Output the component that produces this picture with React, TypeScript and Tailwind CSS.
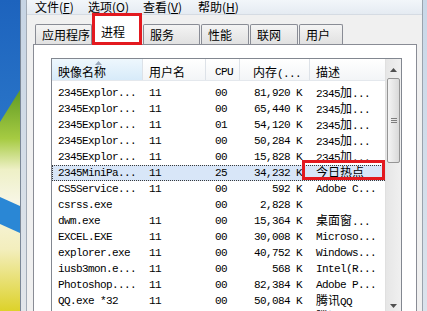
import clsx from 'clsx';

type Proc = [string, string, string, string, string];

const ROWS: Proc[] = [
  ['2345Explor...', '11', '00', '81,920 K', '2345加...'],
  ['2345Explor...', '11', '00', '65,440 K', '2345加...'],
  ['2345Explor...', '11', '01', '54,120 K', '2345加...'],
  ['2345Explor...', '11', '00', '50,284 K', '2345加...'],
  ['2345Explor...', '11', '00', '15,828 K', '2345加...'],
  ['2345MiniPa...', '11', '25', '34,232 K', '今日热点'],
  ['CS5Service...', '11', '00', '592 K', 'Adobe C...'],
  ['csrss.exe', '', '00', '2,828 K', ''],
  ['dwm.exe', '11', '00', '15,364 K', '桌面窗...'],
  ['EXCEL.EXE', '11', '00', '30,008 K', 'Microso...'],
  ['explorer.exe', '11', '00', '40,752 K', 'Windows...'],
  ['iusb3mon.e...', '11', '00', '568 K', 'Intel(R...'],
  ['Photoshop....', '11', '00', '82,384 K', 'Adobe P...'],
  ['QQ.exe *32', '11', '00', '50,084 K', '腾讯QQ'],
  ['QQExternal...', '11', '00', '9,140 K', '腾讯QQ...'],
];

const SELECTED = 5;

// CJK runs get the 12px CJK face, the rest stays in the narrow mono
function Txt({ s }: { s: string }) {
  const parts = s.split(/([\u3400-\u9fff]+)/);
  return (
    <>
      {parts.map((p, i) =>
        /[\u3400-\u9fff]/.test(p) ? (
          <span key={i} className="font-['Noto_Sans_CJK_SC',sans-serif] text-[12px] tracking-normal">
            {p}
          </span>
        ) : (
          <span key={i}>{p}</span>
        )
      )}
    </>
  );
}

function Wallpaper() {
  return (
    <svg width="20" height="311" viewBox="0 0 20 311" className="shrink-0 block">
      <defs>
        <linearGradient id="sky" x1="0" y1="0" x2="0" y2="1">
          <stop offset="0" stopColor="#1d63bd" />
          <stop offset="1" stopColor="#3b8ed8" />
        </linearGradient>
        <linearGradient id="land" gradientUnits="userSpaceOnUse" x1="0" y1="90" x2="0" y2="311">
          <stop offset="0" stopColor="#5f9a24" />
          <stop offset="0.22" stopColor="#a6cb42" />
          <stop offset="0.36" stopColor="#eef0c6" />
          <stop offset="0.5" stopColor="#f7f6e4" />
          <stop offset="0.72" stopColor="#f3eebd" />
          <stop offset="1" stopColor="#ddd22a" />
        </linearGradient>
      </defs>
      <rect width="20" height="311" fill="url(#sky)" />
      <path d="M0 122 L20 90 L20 311 L0 311 Z" fill="url(#land)" />
      <path d="M0 197 L20 206 L20 233 L0 224 Z" fill="#2a87d5" />
    </svg>
  );
}

function Tab({ label, w, first }: { label: string; w: string; first?: boolean }) {
  return (
    <div
      className={clsx(
        'h-[20px] flex items-center pl-[6px] border border-b-0 border-[#898c95] rounded-t-[2px] bg-linear-to-b from-[#f4f4f4] to-[#e1e1e1]',
        w,
        !first && 'ml-[1px]'
      )}
    >
      {label}
    </div>
  );
}

function SortArrow() {
  return (
    <svg width="7" height="4" viewBox="0 0 7 4" className="absolute left-[43px] top-[2px]">
      <path d="M0 4 L3.5 0 L7 4 Z" fill="#9aa9bb" />
    </svg>
  );
}

function Arrow({ up }: { up?: boolean }) {
  return (
    <svg width="7" height="4" viewBox="0 0 7 4">
      <path d={up ? 'M0 4 L3.5 0 L7 4 Z' : 'M0 0 L7 0 L3.5 4 Z'} fill="#4f4f4f" />
    </svg>
  );
}

const mono = "font-['Liberation_Mono',monospace] text-[11px] tracking-[-0.6px]";

function Row({ r, sel }: { r: Proc; sel: boolean }) {
  return (
    <div
      className={clsx(
        'relative flex h-[16px] items-center leading-[16px] whitespace-nowrap',
        sel && 'bg-[#d8e6f8] outline-1 outline-dotted -outline-offset-1 outline-[#3a3a3a]'
      )}
    >
      <div className="w-[91px] pl-[6px] overflow-hidden"><Txt s={r[0]} /></div>
      <div className="w-[63px] pl-[6px]">{r[1]}</div>
      <div className="w-[34px] pl-[9px]">{r[2]}</div>
      <div className="w-[70px] pr-[8px] text-right">{r[3]}</div>
      <div className="w-[75px] pl-[6px] overflow-hidden"><Txt s={r[4]} /></div>
      {sel && (
        <div className="absolute left-[250px] top-[-5px] w-[83px] h-[20px] border-[3px] border-[#e3191f]" />
      )}
    </div>
  );
}

export default function App() {
  return (
    <div className="w-[427px] h-[311px] overflow-hidden flex bg-[#f0f0f0] text-black text-[12px] font-['Noto_Sans_CJK_SC',sans-serif]">
      <Wallpaper />
      {/* window frame */}
      <div className="w-[7px] shrink-0 bg-linear-to-b from-[#c6d4e4] to-[#e2e6ea] border-l border-l-[#7b8797] border-r border-r-[#a2abb6]" />

      <div className="flex-1 min-w-0 flex flex-col">
        {/* menu bar */}
        <div className="h-[15px] shrink-0 flex pl-[8px] leading-[14px] bg-linear-to-b from-[#f2f6fa] to-[#e5ebf2] border-b border-[#d5dbe3]">
          <span className="w-[53px]">文件(<u className="underline-offset-1">F</u>)</span>
          <span className="w-[55px]">选项(<u className="underline-offset-1">O</u>)</span>
          <span className="w-[55px]">查看(<u className="underline-offset-1">V</u>)</span>
          <span>帮助(<u className="underline-offset-1">H</u>)</span>
        </div>

        {/* tabs */}
        <div className="h-[29px] shrink-0 flex items-end pl-[8px] leading-[14px]">
          <Tab label="应用程序" w="w-[57px]" first />
          <div className="relative z-10 -mb-px w-[50px] h-[32px] flex items-start pt-[9px] pl-[6px] bg-white border-[3px] border-[#e3191f]">
            进程
          </div>
          <Tab label="服务" w="w-[57px]" />
          <Tab label="性能" w="w-[48px]" />
          <Tab label="联网" w="w-[48px]" />
          <Tab label="用户" w="w-[44px]" />
        </div>

        {/* tab page */}
        <div className="flex-1 ml-[6px] mr-[5px] bg-white border border-[#898c95] pl-[17px] pt-[13px]">
          <div className="w-[351px] h-[258px] flex border border-[#828790] overflow-hidden">
            <div className="w-[333px] flex flex-col">
              {/* header */}
              <div className="h-[22px] shrink-0 flex leading-[14px] border-b border-[#e4e8ed]">
                <div className="relative w-[91px] pl-[6px] pt-[6px] border-r border-[#dde2e8] bg-linear-to-b from-[#eef7fd] to-[#d7ebf9]">
                  <SortArrow />
                  映像名称
                </div>
                <div className="w-[63px] pl-[6px] pt-[6px] border-r border-[#dde2e8] bg-linear-to-b from-white to-[#f3f5f7]">用户名</div>
                <div className={clsx('w-[34px] pl-[9px] pt-[6px] border-r border-[#dde2e8] bg-linear-to-b from-white to-[#f3f5f7]', mono)}>CPU</div>
                <div className={clsx('w-[70px] pr-[8px] pt-[6px] text-right border-r border-[#dde2e8] bg-linear-to-b from-white to-[#f3f5f7]', mono)}>
                  <Txt s="内存(..." />
                </div>
                <div className="w-[75px] pl-[6px] pt-[6px] bg-linear-to-b from-white to-[#f3f5f7]">描述</div>
              </div>
              {/* rows */}
              <div className={clsx('pt-[4px]', mono)}>
                {ROWS.map((r, i) => (
                  <Row key={i} r={r} sel={i === SELECTED} />
                ))}
              </div>
            </div>

            {/* vertical scrollbar */}
            <div className="w-[16px] shrink-0 flex flex-col bg-linear-to-r from-[#e6e6e6] to-[#f0f0f0] border-l border-[#e0e0e0]">
              <div className="h-[19px] shrink-0 flex items-center justify-center pt-[2px]">
                <Arrow up />
              </div>
              <div className="h-[85px] shrink-0 mx-[1px] rounded-[2px] border border-[#959595] bg-linear-to-r from-[#f4f4f4] to-[#d9d9d9] flex flex-col items-center justify-center gap-[1px]">
                <div className="w-[6px] h-[1px] bg-[#7d7d7d]" />
                <div className="w-[6px] h-[1px] bg-[#7d7d7d]" />
                <div className="w-[6px] h-[1px] bg-[#7d7d7d]" />
              </div>
              <div className="flex-1" />
              <div className="h-[19px] shrink-0 flex items-center justify-center">
                <Arrow />
              </div>
            </div>
          </div>
        </div>
      </div>

      {/* right frame */}
      <div className="w-[5px] shrink-0 border-l border-[#9aa3ad] bg-linear-to-b from-[#c9d8e8] to-[#dbe3ec]" />
    </div>
  );
}
